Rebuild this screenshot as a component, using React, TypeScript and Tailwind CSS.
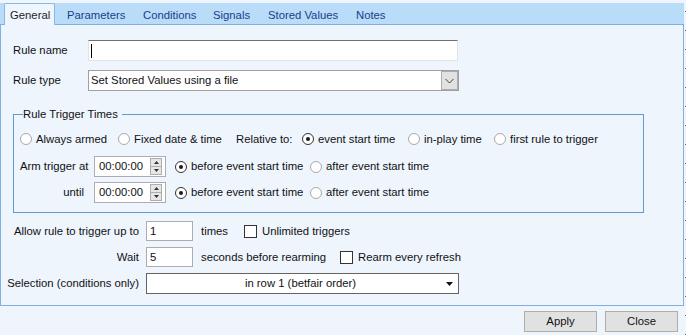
import React from "react";

const tabs = [
  { name: "Parameters", w: "w-[82px] pl-[12px]" },
  { name: "Conditions", w: "w-[70px] pl-[6px]" },
  { name: "Signals", w: "w-[55px] pl-[6px]" },
  { name: "Stored Values", w: "w-[88px] pl-[6px]" },
  { name: "Notes", w: "w-[50px] pl-[6px]" },
];

function Radio({ checked, label, className = "" }: { checked?: boolean; label: string; className?: string }) {
  return (
    <div className={`flex items-center shrink-0 whitespace-nowrap ${className}`}>
      <span
        className={`w-[12px] h-[12px] rounded-full border bg-white flex items-center justify-center shrink-0 ${
          checked ? "border-[#333333]" : "border-[#a9a9a9]"
        }`}
      >
        {checked && <span className="w-[4px] h-[4px] rounded-full bg-[#1a1a1a]" />}
      </span>
      <span className="ml-[4px]">{label}</span>
    </div>
  );
}

function Checkbox({ label, className = "" }: { label: string; className?: string }) {
  return (
    <div className={`flex items-center shrink-0 whitespace-nowrap ${className}`}>
      <span className="w-[13px] h-[13px] border border-[#333333] bg-white shrink-0" />
      <span className="ml-[5px]">{label}</span>
    </div>
  );
}

function TimeBox() {
  return (
    <div className="w-[72px] h-[21px] border border-[#abadb3] bg-white flex items-center shrink-0">
      <span className="pl-[4px] flex-1">00:00:00</span>
      <div className="w-[12px] h-[17px] mr-[3px] border border-[#adadad] bg-[#e6e6e6] flex flex-col">
        <div className="flex-1 flex items-center justify-center border-b border-[#adadad]">
          <svg width="5" height="3" viewBox="0 0 5 3">
            <path d="M0 3 L2.5 0 L5 3 Z" fill="#333" />
          </svg>
        </div>
        <div className="flex-1 flex items-center justify-center">
          <svg width="5" height="3" viewBox="0 0 5 3">
            <path d="M0 0 L2.5 3 L5 0 Z" fill="#333" />
          </svg>
        </div>
      </div>
    </div>
  );
}

export default function App() {
  return (
    <div className="w-[686px] h-[335px] bg-[#eef5fd] flex font-['Liberation_Sans',Arial,sans-serif] text-[11.3px] text-[#111111] overflow-hidden">
      <div className="w-[684px] flex flex-col">
        {/* Tab strip */}
        <div className="mt-[3px] h-[21px] bg-[#b9dcf8] flex items-start relative z-10">
          <div className="ml-[4px] w-[51px] h-[22px] bg-[#eef5fd] border border-b-0 border-[#8cb8e3] rounded-t-[2px] flex items-center pl-[5px] pt-[2px] text-[#1e1e1e]">
            General
          </div>
          {tabs.map((t) => (
            <div key={t.name} className={`${t.w} h-[21px] flex items-center pt-[3px] whitespace-nowrap text-[#1b3c8c]`}>
              {t.name}
            </div>
          ))}
        </div>

        {/* Panel */}
        <div className="h-[282px] border border-[#7fb0df] bg-[#eef5fd] flex flex-col pt-[15px]">
          <div className="h-[21px] flex items-center">
            <span className="w-[87px] pl-[12px]">Rule name</span>
            <div className="w-[370px] h-[21px] bg-white border border-[#e3e3e3] border-t-[#707070] flex items-center pl-[2px]">
              <span className="w-[1px] h-[14px] bg-black" />
            </div>
          </div>

          <div className="mt-[9px] h-[21px] flex items-center">
            <span className="w-[87px] pl-[12px]">Rule type</span>
            <div className="w-[371px] h-[21px] bg-white border border-[#a0a0a0] flex items-center">
              <span className="pl-[2px] flex-1">Set Stored Values using a file</span>
              <div className="w-[17px] h-[19px] bg-[#e1e1e1] border border-[#adadad] flex items-center justify-center">
                <svg width="9" height="6" viewBox="0 0 9 6">
                  <path d="M0.5 1 L4.5 5 L8.5 1" stroke="#444" strokeWidth="1" fill="none" />
                </svg>
              </div>
            </div>
          </div>

          {/* Rule Trigger Times */}
          <fieldset className="mt-[16px] ml-[12px] w-[631px] border border-[#5c9bd6] pl-[6px] pb-[9px]">
            <legend className="ml-[3px] pr-[4px] leading-[14px]">Rule Trigger Times</legend>
            <div className="mt-[8px] h-[20px] flex items-center">
              <Radio label="Always armed" className="w-[98px]" />
              <Radio label="Fixed date & time" className="w-[118px]" />
              <span className="w-[66px] whitespace-nowrap">Relative to:</span>
              <Radio checked label="event start time" className="w-[106px]" />
              <Radio label="in-play time" className="w-[86px]" />
              <Radio label="first rule to trigger" />
            </div>
            <div className="mt-[7px] h-[21px] flex items-center">
              <span className="w-[74px] whitespace-nowrap">Arm trigger at</span>
              <TimeBox />
              <Radio checked label="before event start time" className="ml-[9px] w-[135px]" />
              <Radio label="after event start time" />
            </div>
            <div className="mt-[5px] h-[21px] flex items-center">
              <span className="w-[74px] text-right pr-[10px]">until</span>
              <TimeBox />
              <Radio checked label="before event start time" className="ml-[9px] w-[135px]" />
              <Radio label="after event start time" />
            </div>
          </fieldset>

          <div className="mt-[8px] h-[20px] flex items-center">
            <span className="w-[138px] text-right whitespace-nowrap">Allow rule to trigger up to</span>
            <div className="ml-[7px] w-[47px] h-[20px] bg-white border border-[#abadb3] flex items-center pl-[3px]">1</div>
            <span className="ml-[8px] w-[43px]">times</span>
            <Checkbox label="Unlimited triggers" />
          </div>

          <div className="mt-[6px] h-[20px] flex items-center">
            <span className="w-[138px] text-right">Wait</span>
            <div className="ml-[7px] w-[47px] h-[20px] bg-white border border-[#abadb3] flex items-center pl-[3px]">5</div>
            <span className="ml-[8px] w-[139px] whitespace-nowrap">seconds before rearming</span>
            <Checkbox label="Rearm every refresh" />
          </div>

          <div className="mt-[6px] h-[21px] flex items-center">
            <span className="w-[138px] text-right whitespace-nowrap">Selection (conditions only)</span>
            <div className="ml-[7px] w-[313px] h-[21px] bg-white border border-[#646464] flex items-center">
              <span className="flex-1 text-center pl-[8px]">in row 1 (betfair order)</span>
              <svg width="7" height="4" viewBox="0 0 7 4" className="mr-[5px]">
                <path d="M0 0 L7 0 L3.5 4 Z" fill="#111" />
              </svg>
            </div>
          </div>
        </div>

        {/* Buttons */}
        <div className="mt-[5px] flex justify-end gap-[8px] pr-[6px]">
          <button className="w-[73px] h-[21px] bg-[#e1e1e1] border border-[#adadad] text-[#111]">Apply</button>
          <button className="w-[73px] h-[21px] bg-[#e1e1e1] border border-[#adadad] text-[#111]">Close</button>
        </div>
      </div>
      <div className="w-[1px] ml-[1px] h-full bg-[repeating-linear-gradient(to_bottom,transparent_0_11px,#666666_11px_12px,transparent_12px_19px)]" />
    </div>
  );
}
